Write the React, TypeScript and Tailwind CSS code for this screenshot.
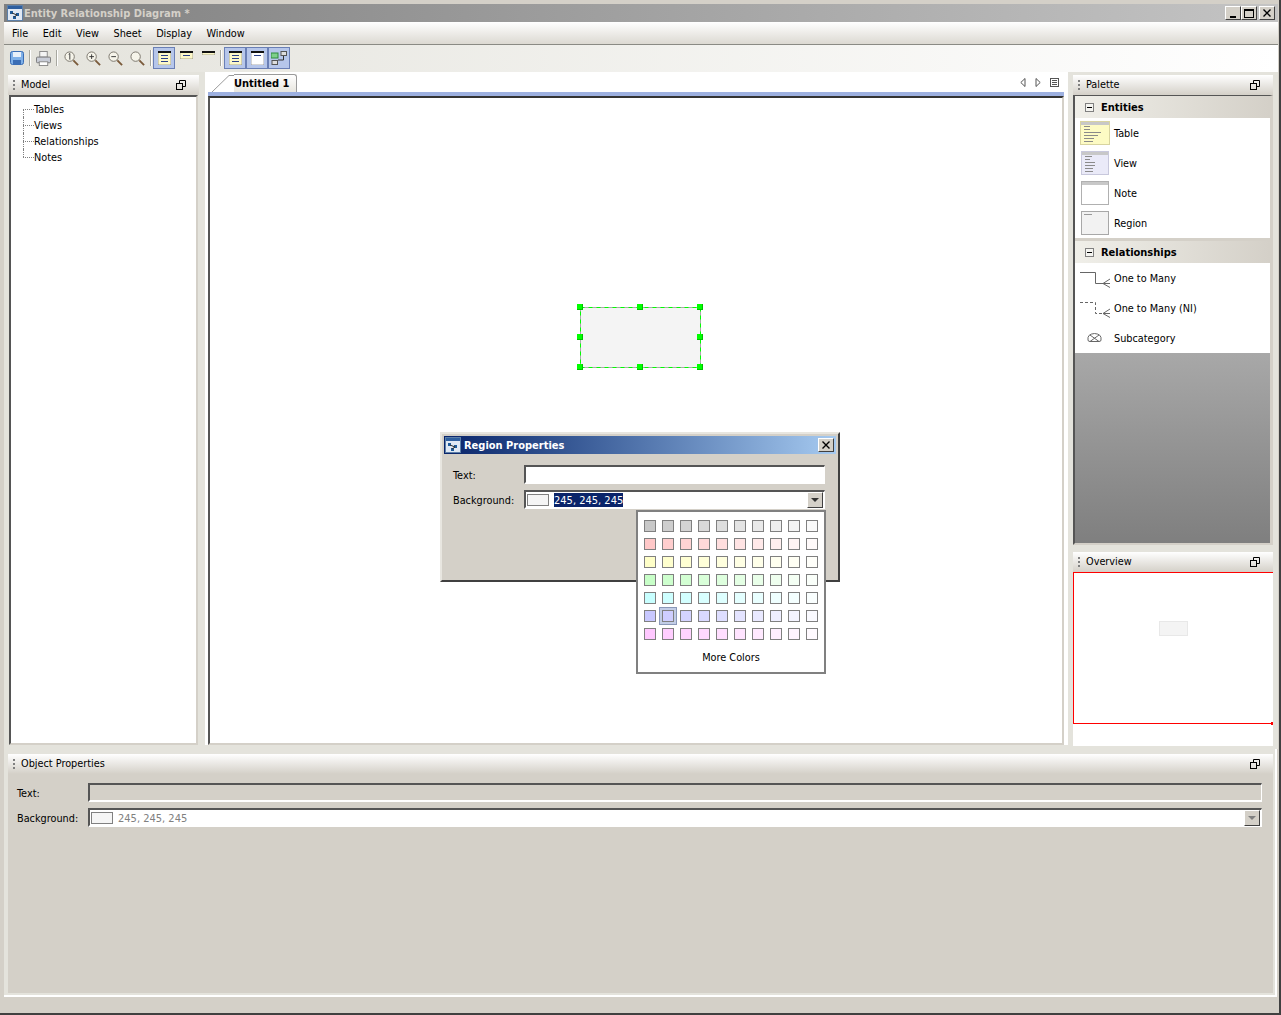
import React from 'react';

const FONT = "font-['DejaVu_Sans_Condensed','DejaVu_Sans',sans-serif]";

const HUES: number[][] = [
  [200, 200, 200],
  [255, 200, 200],
  [255, 255, 200],
  [200, 255, 200],
  [200, 255, 255],
  [200, 200, 255],
  [255, 200, 255],
];

function swatch(base: number[], i: number) {
  const t = i / 10;
  const ch = base.map(v => Math.round(v + (255 - v) * t));
  return `rgb(${ch[0]}, ${ch[1]}, ${ch[2]})`;
}

function AppIcon() {
  return (
    <svg width="16" height="16" viewBox="0 0 16 16">
      <rect x="0.5" y="0.5" width="15" height="15" fill="#dfe8f4" stroke="#5c7fa8" />
      <rect x="1" y="1" width="14" height="3" fill="#2f5f9f" />
      <rect x="3" y="6" width="3" height="3" fill="#1d5a9a" />
      <rect x="9" y="8" width="3" height="3" fill="#1d5a9a" />
      <rect x="6" y="11" width="3" height="3" fill="#1d5a9a" />
      <path d="M5 8l5 2M7 12l3-2" stroke="#333" />
    </svg>
  );
}

function Restore() {
  return (
    <svg width="10" height="10" viewBox="0 0 10 10" fill="none" stroke="#000">
      <rect x="0.5" y="3.5" width="6" height="6" />
      <path d="M3.5 3V0.5h6v6H7" />
    </svg>
  );
}

function Grip() {
  return (
    <div className="flex flex-col gap-[2px] mr-[6px]">
      <span className="h-[2px] w-[2px] bg-[#808080]" />
      <span className="h-[2px] w-[2px] bg-[#808080]" />
      <span className="h-[2px] w-[2px] bg-[#808080]" />
    </div>
  );
}

function PanelHeader({ title }: { title: string }) {
  return (
    <div className="h-[20px] shrink-0 flex items-center pl-[5px] pr-[13px] pb-[1px] bg-gradient-to-b from-white to-[#d4d0c8] text-[10.8px] text-black">
      <Grip />
      <span className="flex-1 pt-[2px]">{title}</span>
      <Restore />
    </div>
  );
}

function Magnifier({ sign }: { sign?: string }) {
  return (
    <svg width="15" height="15" viewBox="0 0 16 16" fill="none">
      <circle cx="6" cy="6" r="5" fill="#f6f4ea" stroke="#77736a" />
      {sign === 'one' && <path d="M5 3.5l1.2-.8v6.5" stroke="#333" />}
      {sign === 'plus' && <path d="M3.5 6h5M6 3.5v5" stroke="#333" />}
      {sign === 'minus' && <path d="M3.5 6h5" stroke="#333" />}
      <path d="M10 10l5 5" stroke="#7a5a3a" strokeWidth="2" />
    </svg>
  );
}

function Sep({ className = '' }: { className?: string }) {
  return <span className={`h-[16px] w-[2px] border-l border-r border-l-[#a8a8a0] border-r-white ${className}`} />;
}

function Toggle({ children }: { children: React.ReactNode }) {
  return (
    <span className="flex h-[22px] w-[22px] items-center justify-center border border-[#6a7fb5] bg-[#b6c6ea]">
      {children}
    </span>
  );
}

function SheetIcon({ rows = 3, h = 14, fill = '#fdf8c8' }: { rows?: number; h?: number; fill?: string }) {
  return (
    <svg width="13" height={h} viewBox={`0 0 13 ${h}`}>
      <rect x="0" y="0" width="13" height={h} fill={fill} stroke="#555" strokeWidth="0.5" />
      <rect x="0" y="0" width="13" height="2" fill="#111" />
      {Array.from({ length: rows }).map((_, i) => (
        <rect key={i} x="3" y={4 + i * 3} width="7" height="1" fill="#2a3f8a" />
      ))}
    </svg>
  );
}

function Toolbar() {
  return (
    <div className="h-[27px] shrink-0 flex items-center pl-[6px] pb-[1px] bg-gradient-to-r from-[#e4e3dc] to-white">
      <svg width="14" height="14" viewBox="0 0 14 14">
        <rect x="0.5" y="0.5" width="13" height="13" rx="2" fill="#7fb0e8" stroke="#3a6db5" />
        <rect x="3" y="1" width="8" height="5" fill="#e8f0fa" />
        <rect x="3" y="9" width="8" height="4" fill="#3a6db5" />
      </svg>
      <Sep className="mx-[5px]" />
      <svg width="15" height="15" viewBox="0 0 16 16">
        <rect x="4" y="0.5" width="8" height="6" fill="#f4f4f4" stroke="#888" />
        <rect x="0.5" y="6.5" width="15" height="6" rx="1" fill="#c8ccd6" stroke="#777" />
        <rect x="3.5" y="11.5" width="9" height="4" fill="#fff" stroke="#888" />
      </svg>
      <Sep className="ml-[5px] mr-[6px]" />
      <span className="flex items-center gap-[7px]">
        <Magnifier sign="one" />
        <Magnifier sign="plus" />
        <Magnifier sign="minus" />
        <Magnifier />
      </span>
      <Sep className="ml-[5px] mr-[1px]" />
      <Toggle><SheetIcon /></Toggle>
      <span className="w-[22px] flex justify-center mb-[6px]"><SheetIcon rows={1} h={8} /></span>
      <span className="w-[22px] flex justify-center mb-[10px]"><SheetIcon rows={0} h={4} /></span>
      <Sep className="ml-[1px] mr-[2px]" />
      <Toggle><SheetIcon rows={3} /></Toggle>
      <Toggle><SheetIcon rows={1} fill="#fff" /></Toggle>
      <Toggle>
        <svg width="16" height="14" viewBox="0 0 16 14" fill="none">
          <rect x="0" y="2" width="7" height="5" fill="#7ed08a" stroke="#2f8a3f" />
          <rect x="10" y="0.5" width="5.5" height="4" fill="#ddd" stroke="#555" />
          <rect x="1" y="9.5" width="5.5" height="4" fill="#ddd" stroke="#555" />
          <path d="M12.5 5v4H7" stroke="#333" />
        </svg>
      </Toggle>
    </div>
  );
}

function Tree() {
  const items = ['Tables', 'Views', 'Relationships', 'Notes'];
  return (
    <div className="flex-1 mx-[1px] bg-white border-2 border-t-[#555] border-l-[#555] border-r-[#d4d0c8] border-b-[#d4d0c8] pt-[4px] pl-[12px] text-[10.8px] text-black">
      {items.map((t, i) => (
        <div key={t} className="flex h-[16px] items-center">
          <span className="relative h-full w-[11px] shrink-0">
            {i === 0 && <span className="absolute left-0 top-[8px] h-[8px] border-l border-dotted border-[#808080]" />}
            {i > 0 && i < items.length - 1 && <span className="absolute left-0 top-0 h-[16px] border-l border-dotted border-[#808080]" />}
            {i === items.length - 1 && <span className="absolute left-0 top-0 h-[8px] border-l border-dotted border-[#808080]" />}
            <span className="absolute left-0 top-[8px] w-[11px] border-t border-dotted border-[#808080]" />
          </span>
          <span className="pt-[2px]">{t}</span>
        </div>
      ))}
    </div>
  );
}

function Tab() {
  return (
    <div className="h-[20px] shrink-0 flex items-end bg-white">
      <svg width="22" height="18" viewBox="0 0 22 18" className="ml-[7px] shrink-0" fill="none">
        <path d="M0 18L17 1.5h5" stroke="#9a9a9a" />
      </svg>
      <div className="h-[18px] w-[63px] shrink-0 border-t border-r border-[#9a9a9a] rounded-tr-[3px] bg-gradient-to-b from-white to-[#e8e6df] text-[11px] font-bold text-black leading-[18px]">
        Untitled 1
      </div>
      <div className="flex-1 flex items-center justify-end gap-[9px] pr-[9px] h-full pt-[1px]">
        <svg width="6" height="9" viewBox="0 0 6 9" fill="none" stroke="#555"><path d="M5 .5L.8 4.5 5 8.5z" /></svg>
        <svg width="6" height="9" viewBox="0 0 6 9" fill="none" stroke="#555"><path d="M1 .5L5.2 4.5 1 8.5z" /></svg>
        <svg width="9" height="9" viewBox="0 0 9 9" fill="none" stroke="#555"><rect x=".5" y=".5" width="8" height="8" /><path d="M2 2.5h5M2 4.5h5M2 6.5h5" /></svg>
      </div>
    </div>
  );
}

function RegionShape() {
  const handles = [
    [-3, -3], [57, -3], [117, -3],
    [-3, 27], [117, 27],
    [-3, 57], [57, 57], [117, 57],
  ];
  return (
    <div className="absolute left-[370px] top-[209px] h-[60px] w-[120px] bg-[#f4f4f4]">
      <svg width="121" height="61" className="absolute left-0 top-0" fill="none">
        <rect x=".5" y=".5" width="120" height="60" stroke="#aaaaaa" />
        <rect x=".5" y=".5" width="120" height="60" stroke="#00ff00" strokeDasharray="4 4" />
      </svg>
      {handles.map(([x, y], i) => (
        <span key={i} className="absolute h-[6px] w-[6px] bg-[#00ff00] border-r border-b border-[#00c000]" style={{ left: x, top: y }} />
      ))}
    </div>
  );
}

function Sunken({ className = '', children }: { className?: string; children?: React.ReactNode }) {
  return (
    <div className={`border-t-2 border-l-2 border-t-[#555] border-l-[#555] border-r border-b-2 border-r-white border-b-white ${className}`}>
      {children}
    </div>
  );
}

function ComboValue({ selected, disabled }: { selected?: boolean; disabled?: boolean }) {
  return (
    <>
      <span className="ml-[1px] h-[12px] w-[22px] shrink-0 border border-[#808080] bg-[#f5f5f5]" />
      <span className={`ml-[5px] mt-[1px] h-[14px] text-[11px] leading-[15px] ${selected ? 'bg-[#0a246a] text-white' : ''} ${disabled ? 'text-[#808080]' : ''}`}>
        245, 245, 245
      </span>
    </>
  );
}

function ComboArrow({ disabled }: { disabled?: boolean }) {
  return (
    <span className="ml-auto flex h-[16px] w-[16px] shrink-0 items-center justify-center border-t border-l border-t-white border-l-white border-r border-b border-r-[#404040] border-b-[#404040] bg-[#d4d0c8]">
      <svg width="8" height="4" viewBox="0 0 8 4"><path d="M0 0h8L4 4z" fill={disabled ? '#808080' : '#333'} /></svg>
    </span>
  );
}

function ColorPopup() {
  return (
    <div className="absolute left-[194px] top-[76px] w-[190px] h-[164px] bg-white border-2 border-[#808080] pt-[8px] pl-[6px]">
      <div className="flex flex-col gap-[6px]">
        {HUES.map((hue, r) => (
          <div key={r} className="flex gap-[6px]">
            {Array.from({ length: 10 }).map((_, c) => (
              <span
                key={c}
                className={`h-[12px] w-[12px] border border-[#808080] ${r === 5 && c === 1 ? 'shadow-[0_0_0_2px_#c2cde6,0_0_0_3px_#8a98b8]' : ''}`}
                style={{ background: swatch(hue, c) }}
              />
            ))}
          </div>
        ))}
      </div>
      <div className="mt-[10px] -ml-[6px] text-center text-[10.8px] text-black">More Colors</div>
    </div>
  );
}

function Dialog() {
  return (
    <div className="absolute left-[440px] top-[432px] h-[150px] w-[400px] bg-[#d4d0c8] border-2 border-t-[#e8e6e0] border-l-[#e8e6e0] border-r-[#404040] border-b-[#404040] p-[2px]">
      <div className="h-[18px] flex items-center pl-[1px] pr-[2px] bg-gradient-to-r from-[#0a246a] to-[#a6caf0]">
        <AppIcon />
        <span className="ml-[3px] pt-[2px] flex-1 text-[11px] font-bold text-white">Region Properties</span>
        <span className="flex h-[14px] w-[16px] items-center justify-center border-t border-l border-t-white border-l-white border-r border-b border-r-[#404040] border-b-[#404040] bg-[#d4d0c8]">
          <svg width="8" height="8" viewBox="0 0 8 8" stroke="#000" strokeWidth="1.4"><path d="M.5.5l7 7M7.5.5l-7 7" /></svg>
        </span>
      </div>
      <div className="pt-[11px] pl-[9px] pr-[11px] text-[10.8px] text-black">
        <div className="flex items-center h-[19px]">
          <span className="w-[71px] pt-[4px]">Text:</span>
          <Sunken className="flex-1 h-[19px] bg-white" />
        </div>
        <div className="mt-[6px] flex items-center h-[19px]">
          <span className="w-[71px] pt-[4px]">Background:</span>
          <Sunken className="flex-1 h-[19px] bg-white flex items-center pr-[1px]">
            <ComboValue selected />
            <ComboArrow />
          </Sunken>
        </div>
      </div>
      <ColorPopup />
    </div>
  );
}

const THUMB_ROWS: Record<string, string[]> = {
  table: ['w-[6px]', 'w-[6px]', 'w-[17px]', 'w-[14px]', 'w-[10px]', 'w-[9px]'],
  view: ['w-[7px]', 'w-[5px]', 'w-[10px]', 'w-[10px]', 'w-[8px]', 'w-[8px]', 'w-[7px]'],
};

function Thumb({ kind }: { kind: 'table' | 'view' | 'note' | 'region' }) {
  const look =
    kind === 'table' ? 'w-[30px] bg-[#fdfbc4] border-[#d8d4a0]'
    : kind === 'view' ? 'ml-[1px] w-[28px] bg-[#eaeaf8] border-[#c8c8dc]'
    : kind === 'note' ? 'ml-[1px] w-[28px] bg-white border-[#b0b0b0]'
    : 'ml-[1px] w-[28px] bg-[#f2f2f2] border-[#a8a8a8]';
  return (
    <div className={`h-[24px] border flex flex-col overflow-hidden ${look}`}>
      {kind !== 'region' && <div className="h-[3px] bg-[#c8c8c8] shrink-0" />}
      {kind === 'region' && <div className="mt-[2px] ml-[2px] h-[1px] w-[8px] bg-[#999]" />}
      {(kind === 'table' || kind === 'view') && (
        <div className="flex flex-col gap-[2px] pt-[1px] pl-[3px]">
          {THUMB_ROWS[kind].map((w, i) => <span key={i} className={`h-[1px] bg-[#8a8a8a] ${w}`} />)}
        </div>
      )}
    </div>
  );
}

function RelIcon({ dashed }: { dashed?: boolean }) {
  return (
    <svg width="34" height="20" viewBox="0 0 34 20" fill="none" stroke="#666">
      <path d="M0 4.5h15.5v11H23" strokeDasharray={dashed ? '3 2' : undefined} />
      <path d="M23 15.5l7-4.5M23 15.5h7M23 15.5l7 4" />
    </svg>
  );
}

function PaletteHeader({ title }: { title: string }) {
  return (
    <div className="h-[22px] shrink-0 flex items-center pl-[10px] bg-gradient-to-r from-[#f0efe9] to-[#d4d0c8] text-[11px] font-bold text-black">
      <span className="flex h-[9px] w-[9px] items-center justify-center border border-[#808080] bg-[#f4f4f0]">
        <span className="h-[1px] w-[5px] bg-black" />
      </span>
      <span className="ml-[7px] pt-[2px]">{title}</span>
    </div>
  );
}

function PaletteRow({ icon, label }: { icon: React.ReactNode; label: string }) {
  return (
    <div className="h-[30px] flex items-center pl-[5px] text-[10.8px] text-black">
      <span className="w-[34px] flex items-center">{icon}</span>
      <span className="pt-[2px]">{label}</span>
    </div>
  );
}

function Palette() {
  return (
    <div className="h-[470px] shrink-0 flex flex-col bg-[#e4e3dc]">
      <PanelHeader title="Palette" />
      <div className="flex-1 flex flex-col border-t border-l-2 border-r-[3px] border-b-2 border-t-[#555] border-l-[#555] border-r-[#d4d0c8] border-b-[#d4d0c8]">
        <PaletteHeader title="Entities" />
        <div className="h-[120px] shrink-0 bg-white">
          <PaletteRow icon={<Thumb kind="table" />} label="Table" />
          <PaletteRow icon={<Thumb kind="view" />} label="View" />
          <PaletteRow icon={<Thumb kind="note" />} label="Note" />
          <PaletteRow icon={<Thumb kind="region" />} label="Region" />
        </div>
        <div className="h-[3px] shrink-0 bg-[#d4d0c8]" />
        <PaletteHeader title="Relationships" />
        <div className="h-[90px] shrink-0 bg-white">
          <PaletteRow icon={<RelIcon />} label="One to Many" />
          <PaletteRow icon={<RelIcon dashed />} label="One to Many (NI)" />
          <PaletteRow
            icon={
              <svg width="34" height="14" viewBox="0 0 34 14" fill="none" stroke="#666">
                <path d="M8 9Q7 3 14.5 2.5Q22 3 21 9Q21 10.5 19 10.5H10Q8 10.5 8 9Z" />
                <path d="M10 4l9 6.5M19 4l-9 6.5" />
              </svg>
            }
            label="Subcategory"
          />
        </div>
        <div className="flex-1 bg-gradient-to-b from-[#a8a8a8] to-[#7f7f7f]" />
      </div>
    </div>
  );
}

function Overview() {
  return (
    <div className="flex-1 flex flex-col bg-white">
      <PanelHeader title="Overview" />
      <div className="relative h-[152px] border border-r-0 border-[#ff0000]">
        <span className="absolute right-0 -bottom-[2px] h-[3px] w-[2px] bg-[#ff0000]" />
        <div className="absolute left-[85px] top-[48px] h-[15px] w-[29px] border border-[#e8e8e8] bg-[#f4f4f4]" />
      </div>
    </div>
  );
}

function ObjectProperties() {
  return (
    <div className="ml-[4px] mr-[2px] mt-[5px] h-[239px] flex flex-col bg-[#d4d0c8]">
      <PanelHeader title="Object Properties" />
      <div className="pt-[9px] pl-[9px] pr-[11px] text-[10.8px] text-black">
        <div className="flex items-center h-[19px]">
          <span className="w-[71px] pt-[4px]">Text:</span>
          <Sunken className="flex-1 h-[19px] bg-[#d4d0c8]" />
        </div>
        <div className="mt-[6px] flex items-center h-[19px]">
          <span className="w-[71px] pt-[4px]">Background:</span>
          <Sunken className="flex-1 h-[19px] bg-white flex items-center pr-[1px]">
            <ComboValue disabled />
            <ComboArrow disabled />
          </Sunken>
        </div>
      </div>
    </div>
  );
}

export default function App() {
  const menus = ['File', 'Edit', 'View', 'Sheet', 'Display', 'Window'];
  return (
    <div className={`relative h-[1015px] w-[1281px] overflow-hidden bg-[#d4d0c8] ${FONT}`}>
      <div className="h-full border-r-2 border-b-2 border-r-[#404040] border-b-[#404040]">
        <div className="h-full flex flex-col pt-[4px] pl-[4px] pr-[1px] pb-[1px]">
          {/* title bar */}
          <div className="h-[18px] shrink-0 flex items-center pl-[3px] pr-[3px] bg-gradient-to-r from-[#808080] to-[#c4c4c4]">
            <AppIcon />
            <span className="ml-[1px] pt-[2px] flex-1 text-[11px] font-bold text-[#d4d0c8]">Entity Relationship Diagram *</span>
            <div className="flex">
              {['min', 'max', 'close'].map(k => (
                <span key={k} className={`flex h-[14px] w-[16px] items-center justify-center border-t border-l border-white border-r border-b border-r-[#404040] border-b-[#404040] bg-[#d4d0c8] ${k === 'close' ? 'ml-[2px]' : ''}`}>
                  {k === 'min' && <span className="mt-[7px] h-[2px] w-[6px] bg-black" />}
                  {k === 'max' && <span className="h-[9px] w-[10px] border border-t-2 border-black" />}
                  {k === 'close' && (
                    <svg width="8" height="8" viewBox="0 0 8 8" stroke="#000" strokeWidth="1.4"><path d="M.5.5l7 7M7.5.5l-7 7" /></svg>
                  )}
                </span>
              ))}
            </div>
          </div>

          {/* menu bar */}
          <div className="h-[23px] shrink-0 flex items-center gap-[14.5px] pl-[8px] pt-[2px] border-b border-[#8a8a84] bg-gradient-to-b from-white to-[#dcd9d2] text-[10.8px] text-black">
            {menus.map(m => <span key={m}>{m}</span>)}
          </div>

          <Toolbar />

          {/* main */}
          <div className="h-[677px] shrink-0 flex bg-[#e4e3dc] pt-[3px] pl-[4px]">
            <div className="w-[191px] shrink-0 flex flex-col mb-[4px]">
              <PanelHeader title="Model" />
              <Tree />
            </div>
            <div className="ml-[6px] w-[863px] shrink-0 -mt-[3px] flex flex-col mb-[4px] bg-white">
              <Tab />
              <div className="relative ml-[3px] mr-[4px] flex-1 border-t-[4px] border-t-[#9db0e0] bg-white">
                <div className="absolute inset-0 border-2 border-t-[#333] border-l-[#555] border-r-[#d4d0c8] border-b-[#d4d0c8]">
                  <RegionShape />
                </div>
              </div>
            </div>
            <div className="ml-[5px] w-[200px] shrink-0 flex flex-col gap-[7px] mb-[3px]">
              <Palette />
              <Overview />
            </div>
          </div>

          <div className="flex-1 mr-[1px] bg-[#e4e3dc] border-b-2 border-r-2 border-white">
            <ObjectProperties />
          </div>
          <div className="h-[15px] shrink-0" />
        </div>
      </div>
      <Dialog />
    </div>
  );
}
